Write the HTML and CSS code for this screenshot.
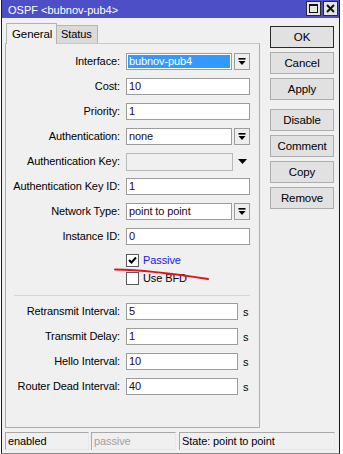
FILE: index.html
```html
<!DOCTYPE html>
<html>
<head>
<meta charset="utf-8">
<link rel="stylesheet" href="styles.css">
</head>
<body>
<div class="window">
  <div class="titlebar">
    <span class="title">OSPF &lt;bubnov-pub4&gt;</span>
    <div class="tb-btns">
      <span class="tb-btn"><svg width="13" height="13" viewBox="0 0 13 13"><rect x="2.5" y="2.5" width="8" height="8" fill="none" stroke="#111" stroke-width="1"/><rect x="2" y="2" width="9" height="2" fill="#111"/></svg></span>
      <span class="tb-btn"><svg width="13" height="13" viewBox="0 0 13 13"><path d="M3 3 L10 10 M10 3 L3 10" stroke="#111" stroke-width="2"/></svg></span>
    </div>
  </div>
  <div class="main">
    <div class="left">
      <div class="tabs">
        <div class="tab active">General</div>
        <div class="tab">Status</div>
      </div>
      <div class="panel">
        <div class="row"><span class="label">Interface:</span><span class="combo"><span class="input sel">bubnov-pub4</span><span class="ddbtn"><svg width="14" height="14" viewBox="0 0 14 14"><rect x="3.5" y="3" width="7" height="1.6" fill="#000"/><path d="M3.5 6 H10.5 L7 10 Z" fill="#000"/></svg></span></span></div>
        <div class="row"><span class="label">Cost:</span><span class="input full">10</span></div>
        <div class="row"><span class="label">Priority:</span><span class="input full">1</span></div>
        <div class="row"><span class="label">Authentication:</span><span class="combo"><span class="input">none</span><span class="ddbtn"><svg width="14" height="14" viewBox="0 0 14 14"><rect x="3.5" y="3" width="7" height="1.6" fill="#000"/><path d="M3.5 6 H10.5 L7 10 Z" fill="#000"/></svg></span></span></div>
        <div class="row"><span class="label">Authentication Key:</span><span class="input dis"></span><span class="arrow"><svg width="9" height="6" viewBox="0 0 9 6"><path d="M0 0 H9 L4.5 5 Z" fill="#000"/></svg></span></div>
        <div class="row"><span class="label">Authentication Key ID:</span><span class="input full">1</span></div>
        <div class="row"><span class="label">Network Type:</span><span class="combo"><span class="input">point to point</span><span class="ddbtn"><svg width="14" height="14" viewBox="0 0 14 14"><rect x="3.5" y="3" width="7" height="1.6" fill="#000"/><path d="M3.5 6 H10.5 L7 10 Z" fill="#000"/></svg></span></span></div>
        <div class="row"><span class="label">Instance ID:</span><span class="input full">0</span></div>
        <div class="check-row passive"><span class="cbox"><svg width="11" height="11" viewBox="0 0 11 11"><path d="M2 5 L4.5 7.5 L9 2.5" fill="none" stroke="#000" stroke-width="2"/></svg></span><span class="clabel blue">Passive</span></div>
        <div class="check-row bfd"><span class="cbox"></span><span class="clabel">Use BFD</span></div>
        <div class="sep"></div>
        <div class="row"><span class="label">Retransmit Interval:</span><span class="input short">5</span><span class="unit">s</span></div>
        <div class="row"><span class="label">Transmit Delay:</span><span class="input short">1</span><span class="unit">s</span></div>
        <div class="row"><span class="label">Hello Interval:</span><span class="input short">10</span><span class="unit">s</span></div>
        <div class="row"><span class="label">Router Dead Interval:</span><span class="input short">40</span><span class="unit">s</span></div>
      </div>
    </div>
    <div class="buttons">
      <div class="btn default">OK</div>
      <div class="btn">Cancel</div>
      <div class="btn">Apply</div>
      <div class="btn gap">Disable</div>
      <div class="btn">Comment</div>
      <div class="btn">Copy</div>
      <div class="btn">Remove</div>
    </div>
  </div>
  <div class="statusbar">
    <div class="field f1">enabled</div>
    <div class="field f2 grey">passive</div>
    <div class="field f3">State: point to point</div>
  </div>
</div>
<svg class="annot" width="343" height="454" viewBox="0 0 343 454"><path d="M115 269.5 Q150 270 208 279" fill="none" stroke="#e5121b" stroke-width="2" stroke-linecap="round"/></svg>
</body>
</html>
```
FILE: styles.css
```css
body {
  margin: 0;
  background: #ffffff;
  font-family: "Liberation Sans", Arial, sans-serif;
  font-size: 11px;
  letter-spacing: -0.1px;
  color: #000;
  position: relative;
}
.window {
  margin-left: 1px;
  width: 339px;
  height: 454px;
  box-sizing: border-box;
  border: 1px solid #1a1a1a;
  border-top: none;
  border-bottom-color: #8a8a8a;
  background: #f0f0f0;
  display: flex;
  flex-direction: column;
}
.titlebar {
  height: 18px;
  background: #4c4fc6;
  color: #fff;
  display: flex;
  align-items: center;
  justify-content: space-between;
  padding: 0 1px 0 6px;
  font-size: 11px;
  letter-spacing: 0;
}
.title { padding-top: 1px; }
.tb-btns { display: flex; gap: 2px; align-self: flex-start; padding-top: 1px; }
.tb-btn {
  width: 15px;
  height: 15px;
  box-sizing: border-box;
  border: 1px solid #2a2a2a;
  background: #e4e4e4;
  display: flex;
  align-items: center;
  justify-content: center;
}
.tb-btn svg { display: block; }
.main {
  display: flex;
  padding: 5px 0 0 3px;
}
.left { width: 255px; }
.tabs { display: flex; align-items: flex-end; height: 20px; margin-left: 1px; }
.tab {
  box-sizing: border-box;
  border: 1px solid #b4b4b4;
  border-bottom: none;
  padding: 0 5px;
  height: 18px;
  line-height: 17px;
  background: #dadada;
}
.tab.active {
  height: 21px;
  background: #f0f0f0;
  width: 51px;
  padding-left: 5px;
  line-height: 20px;
  margin-bottom: -1px;
  position: relative;
  z-index: 1;
  font-size: 11.5px;
}
.tab + .tab { border-left: none; width: 41px; padding-left: 4px; }
.panel {
  height: 385px;
  box-sizing: border-box;
  border: 1px solid #adadad;
  border-top-color: #c8c8c8;
  padding-top: 9px;
}
.row {
  display: flex;
  align-items: flex-start;
  height: 25px;
}
.label {
  width: 114px;
  margin-right: 6px;
  text-align: right;
  line-height: 17px;
  white-space: nowrap;
}
.input {
  height: 17px;
  box-sizing: border-box;
  border: 1px solid #9c9c9c;
  background: #fff;
  line-height: 15px;
  padding-left: 2px;
  color: #1c0a22;
  display: block;
}
.input.full { width: 124px; }
.input.short { width: 112px; }
.input.dis { width: 107px; height: 18px; background: #f0f0f0; border-color: #b9b9b9; }
.combo { display: flex; gap: 2px; }
.combo .input { width: 106px; }
.input.sel { background: #3399ff; color: #fff; box-shadow: inset 0 0 0 1px #fff; }
.ddbtn {
  width: 16px;
  height: 17px;
  box-sizing: border-box;
  border: 1px solid #9c9c9c;
  background: #eeeeee;
  display: flex;
  align-items: center;
  justify-content: center;
}
.ddbtn svg { display: block; }
.arrow { margin-left: 5px; padding-top: 6px; }
.arrow svg { display: block; }
.check-row {
  display: flex;
  align-items: center;
  padding-left: 120px;
  height: 13px;
}
.check-row.passive { margin-top: 1px; margin-bottom: 5px; }
.cbox {
  width: 13px;
  height: 13px;
  box-sizing: border-box;
  border: 1px solid #5a5a5a;
  background: #fff;
  display: flex;
  align-items: center;
  justify-content: center;
  margin-right: 4px;
}
.cbox svg { display: block; }
.clabel { line-height: 13px; }
.blue { color: #1a1ae6; }
.sep {
  margin: 10px 0 7px 8px;
  width: 236px;
  height: 1px;
  background: #d6d6d6;
}
.unit { margin-left: 5px; line-height: 19px; }
.buttons {
  margin-left: 10px;
  width: 64px;
  padding-top: 3px;
  display: flex;
  flex-direction: column;
  gap: 4px;
}
.btn {
  height: 22px;
  box-sizing: border-box;
  border: 1px solid #adadad;
  background: #e1e1e1;
  text-align: center;
  line-height: 20px;
  font-size: 11.5px;
}
.btn.default { border-color: #2a2a2a; }
.btn.gap { margin-top: 5px; }
.statusbar {
  margin-top: 4px;
  display: flex;
  padding-left: 3px;
  height: 18px;
}
.field {
  height: 18px;
  box-sizing: border-box;
  border: 1px solid #a8a8a8;
  border-right-color: #e8e8e8;
  border-bottom-color: #e8e8e8;
  line-height: 16px;
  padding-left: 2px;
  white-space: nowrap;
}
.f1 { width: 84px; margin-right: 2px; }
.f2 { width: 85px; margin-right: 3px; }
.f3 { width: 156px; }
.grey { color: #a0a0a0; }
.annot { position: absolute; left: 0; top: 0; pointer-events: none; }
```
